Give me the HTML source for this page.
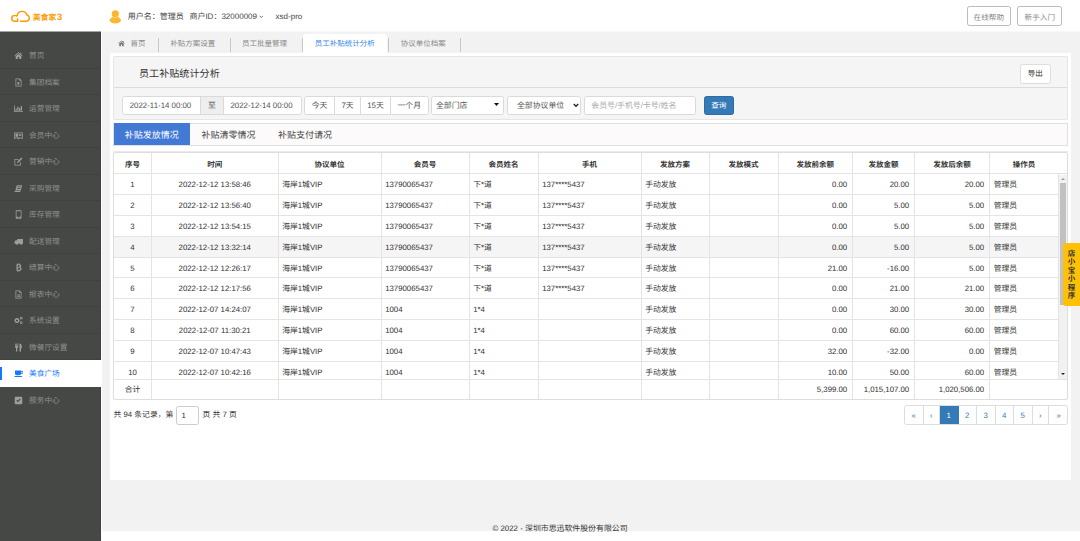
<!DOCTYPE html>
<html lang="zh-CN">
<head>
<meta charset="utf-8">
<title>员工补贴统计分析</title>
<style>
*{box-sizing:border-box;margin:0;padding:0}
html,body{width:1080px;height:541px;overflow:hidden;background:#fff}
body{text-rendering:geometricPrecision;font-family:"Liberation Sans","Noto Sans CJK SC",sans-serif;font-size:8px;color:#333;position:relative}
.abs{position:absolute}
/* header */
#hdr{left:0;top:0;width:1080px;height:31.5px;background:#fff}
#logo-t{left:32.7px;top:9.8px;font-size:7.9px;line-height:14px;color:#f90;font-weight:bold;white-space:nowrap}
#logo-t b{font-size:9.3px;margin-left:0.6px;vertical-align:-0.4px}
.uinfo{top:9.7px;height:14px;line-height:14px;font-size:8px;color:#444;white-space:nowrap}
.hbtn{top:6px;height:20px;border:1px solid #bbb;border-radius:2.5px;background:#fff;color:#888;font-size:7.6px;line-height:21px;text-align:center}
/* sidebar */
#side{left:0;top:32px;width:101px;height:509px;background:#454845;border-right:1px solid #3f423f}
.mi{left:0;width:100px;height:26.5px;border-bottom:1px solid #3f423f;color:#8f918f;font-size:7.7px;line-height:28.8px;white-space:nowrap}
.mi span{position:absolute;left:29px;top:0}
.mi svg{position:absolute;left:13.5px;top:9.3px;width:9px;height:9px;fill:#9c9e9c}
.mi.act{background:#fff;color:#1677ff;border-bottom:none;width:101px}
.mi.act:before{content:"";position:absolute;left:0;top:7px;width:2px;height:13px;background:#1677ff}
.mi:last-child{border-bottom:none}
.mi.act svg{fill:#1677ff}

.btn{color:#333}
#qry{left:703.5px;top:95.7px;width:30.5px;height:19px;background:#337ab7;border:1px solid #2e6da4;border-radius:2.5px;color:#fff;font-size:7.6px;line-height:17px;text-align:center}
#twrap{left:113px;top:152px;width:955px;height:248px;border:1px solid #ddd;border-radius:2px;overflow:hidden;background:#fff}
table.grid{border-collapse:collapse;table-layout:fixed;font-size:7.8px;color:#333}
.grid td,.grid th{border:1px solid #e4e4e4;height:20.9px;padding:2px 3.7px 0;white-space:nowrap;overflow:hidden;text-align:left;line-height:12px}
.grid th{font-size:7.5px;font-weight:bold;text-align:center;height:21px;padding-top:3px}
.grid td.c{text-align:center}.grid td.r{text-align:right;padding-right:4.8px}
.grid tr.hl td{background:#f5f5f5}
#thead{left:-1px!important;top:-1px!important}
#thfill{left:944px;top:0;width:10px;height:20.5px;background:#fff;border-bottom:1px solid #ddd}
#tbody{left:-1px;top:20.5px;width:946px;height:205.5px;overflow:hidden}
#tbody table{margin-top:-0.5px}
#sbar{left:944.5px;top:21.5px;width:9.5px;height:204.5px;background:#f1f1f1}
#sthumb{left:1px;top:8px;width:6.5px;height:122px;background:#c1c1c1}
#tfoot{left:-1px;top:225.5px}
#tfoot td{height:20.3px}
#pinfo{left:113.5px;top:406.3px;height:18.3px;line-height:18.3px;font-size:7.8px;color:#333;white-space:nowrap}
#pinp{display:inline-block;width:23px;height:18.3px;border:1px solid #ccc;border-radius:2.5px;vertical-align:top;text-align:left;padding-left:4px;line-height:17px;margin:0 1px}
#pager{left:904px;top:405px;height:20px;white-space:nowrap;font-size:0;border-radius:2.5px;overflow:hidden;border:1px solid #ddd;width:164px;background:#fff}
#pager span{display:inline-block;height:18px;line-height:20px;text-align:center;font-size:7.8px;color:#337ab7;border-right:1px solid #ddd;vertical-align:top}
#pager span:last-child{border-right:none}
#pager span.on{background:#337ab7;color:#fff;border-color:#337ab7}
#foot{left:40px;width:1040px;top:522px;height:13px;line-height:13px;text-align:center;font-size:7.9px;color:#333}
#ywid{left:1063px;top:242.5px;width:17px;height:63px;background:#ffc107;border-radius:3px 0 0 3px;font-size:7.5px;font-weight:bold;color:#333;line-height:8.5px;padding:7px 4.5px 0 4.7px;word-break:break-all}
/* main */
#main{left:101px;top:32px;width:979px;height:499px;background:#f2f2f2;border-left:1px solid #fff}
#tabs{left:109.3px;top:33.5px;height:20px;width:960px}
.tb{top:0;height:20px;line-height:19.4px;font-size:7.5px;color:#8a8a8a;white-space:nowrap;text-align:center}
.sep{top:4.5px;width:1px;height:14px;background:#c8c8c8}
#tab-act{background:#fff;color:#3787f0;border-radius:3px 3px 0 0}
#panel{left:110px;top:53px;width:961px;height:426.5px;background:#fff}
#well1{left:113px;top:56px;width:955px;height:32px;background:#f5f5f5;border:1px solid #e6e6e6;border-bottom:none;border-radius:2px 2px 0 0}
#title{left:139px;top:67px;font-size:10.1px;line-height:15px;color:#333;white-space:nowrap}
#exp{left:1020px;top:64.3px;width:30.5px;height:19.5px;border:1px solid #ddd;border-radius:2.5px;background:#fff;font-size:7.6px;line-height:17px;text-align:center;color:#333}
#well2{left:113px;top:87px;width:955px;height:32.5px;background:#f5f5f5;border:1px solid #e6e6e6;border-top:1.5px solid #dcdcdc;border-radius:0 0 2px 2px}
.inp{top:96px;height:18.7px;border:1px solid #dadada;background:#fff;font-size:7.87px;line-height:17px;color:#555;white-space:nowrap;text-align:center}
.addon{background:#eee;color:#555}
#nav{left:113px;top:122.5px;width:955px;height:23px;background:#fcfafa;border:1px solid #e2e0e0}
.nt{top:123px;height:22px;line-height:25.5px;font-size:9px;color:#444;text-align:center;white-space:nowrap}
#nt1{left:113.5px;width:76.5px;background:#4279d5;color:#fff}
</style>
</head>
<body>
<div id="hdr" class="abs"></div>
<svg class="abs" style="left:10px;top:9px;width:20px;height:14px" viewBox="0 0 40 28"><g fill="none" stroke="#f90" stroke-width="2.8" stroke-linecap="round" stroke-linejoin="round"><path d="M15 24.5H9.5a5.8 5.8 0 0 1-0.5-11.6c1.6-0.2 3.2 0.1 4.5 1"/><path d="M14.5 13.5c0.5-5 4.5-8.8 9.8-8.8 4.6 0 8.4 3 9.5 7.2 3 0.8 4.7 3.3 4.7 6.2 0 3.6-2.8 6.4-6.5 6.4H21"/><path d="M15.2 24.5v-5"/></g></svg>
<div id="logo-t" class="abs">美食家<b>3</b></div>
<svg class="abs" style="left:108.5px;top:10px;width:13px;height:14px" viewBox="0 0 26 28"><circle cx="12.6" cy="7.6" r="7.2" fill="#fdb62f"/><path d="M0.8 21c1-4 5-6.5 8-7 1.5 1 2.5 1.3 3.8 1.3s2.3-0.3 3.8-1.3c3 0.5 7 3 8 7-2 3.5-7 6-11.8 6S2.8 24.5 0.8 21z" fill="#fdb62f"/></svg>
<div class="abs uinfo" style="left:127.7px">用户名：管理员</div>
<div class="abs uinfo" style="left:189.4px">商户ID：32000009</div>
<svg class="abs" style="left:258.7px;top:14.6px;width:4.6px;height:3.4px" viewBox="0 0 9.2 6.8"><path d="M1 1.5l3.6 3.6 3.6-3.6" fill="none" stroke="#444" stroke-width="1.5"/></svg>
<div class="abs uinfo" style="left:275.6px">xsd-pro</div>
<div class="abs hbtn" style="left:966.8px;width:44px">在线帮助</div>
<div class="abs hbtn" style="left:1017.3px;width:45px">新手入门</div>

<div id="side" class="abs">
<div class="mi abs" style="top:10.0px"><svg viewBox="0 0 18 18"><path d="M9 2.5L0.8 9.3l1 1.2L9 4.6l7.2 5.9 1-1.2-2.7-2.2V3.5h-2v2zM3.3 10.5v5.5h4.2v-4h3v4h4.2v-5.5L9 5.8z"/></svg><span>首页</span></div>
<div class="mi abs" style="top:36.5px"><svg viewBox="0 0 18 18"><path d="M3 1h8.5L15 4.5V17H3zM4.5 2.5v13h9V5.5h-3v-3zM7 8h3.5v5.5H7z" fill-rule="evenodd"/></svg><span>集团档案</span></div>
<div class="mi abs" style="top:63.0px"><svg viewBox="0 0 18 18"><path d="M0 3h1.6v11.5H18V16H0zM3 9.5h2.5v4H3zM6.5 5.5H9v8H6.5zM10 8h2.5v5.5H10zM13.5 4H16v9.5h-2.5z"/></svg><span>运营管理</span></div>
<div class="mi abs" style="top:89.5px"><svg viewBox="0 0 18 18"><path d="M0.5 3h17v12.5h-3v-1h-2.5v1H6v-1H3.5v1h-3zM2 4.5v8.5h14V4.5zM3 5.5h5v6H3zM9.5 6h5.5v1.3H9.5zM9.5 8.5h5.5v1.3H9.5z" fill-rule="evenodd"/></svg><span>会员中心</span></div>
<div class="mi abs" style="top:116.0px"><svg viewBox="0 0 18 18"><path d="M1 4h9l-1.6 1.6H2.6v9.8h9.8v-4L14 9.8V17H1zM14.8 1l2.2 2.2-7.8 7.8-3.2 1 1-3.2z"/></svg><span>营销中心</span></div>
<div class="mi abs" style="top:142.5px"><svg viewBox="0 0 18 18"><path d="M5.5 2.5h11l-3 10.5h-11zM1.5 14h11.5l-0.6 2H1z M7 5l-0.4 1.5h7L14 5zM6.2 8l-0.4 1.5h7L13.2 8z" fill-rule="evenodd"/></svg><span>采购管理</span></div>
<div class="mi abs" style="top:169.0px"><svg viewBox="0 0 18 18"><path d="M5 0.5h8.5a1.5 1.5 0 0 1 1.5 1.5v14a1.5 1.5 0 0 1-1.5 1.5H5A1.5 1.5 0 0 1 3.5 16V2A1.5 1.5 0 0 1 5 0.5zM5 2.5v11h8.5v-11zM8 14.5v1.5h2.5v-1.5z" fill-rule="evenodd"/></svg><span>库存管理</span></div>
<div class="mi abs" style="top:195.5px"><svg viewBox="0 0 18 18"><path d="M6.5 4H18v9.5h-1.5a2.2 2.2 0 0 1-4.4 0H8.4a2.2 2.2 0 0 1-4.4 0H1V9.5L3.5 6.5h3z"/></svg><span>配送管理</span></div>
<div class="mi abs" style="top:222.0px"><svg viewBox="0 0 18 18"><path d="M5 2.5h1.7V0.5h1.6v2h1.2v-2h1.6v2.1c2.2 0.3 3.4 1.4 3.4 3.2 0 1.3-0.7 2.2-1.8 2.7 1.6 0.5 2.5 1.6 2.5 3.2 0 2.2-1.5 3.5-4.1 3.8V17.5H9.5v-2H8.3v2H6.7v-2H5zM7.5 4.5v3.3H9.5c1.4 0 2-0.6 2-1.7 0-1-0.7-1.6-2-1.6zM7.5 9.7v3.8h2.6c1.5 0 2.2-0.7 2.2-1.9s-0.8-1.9-2.2-1.9z" fill-rule="evenodd"/></svg><span>结算中心</span></div>
<div class="mi abs" style="top:248.5px"><svg viewBox="0 0 18 18"><path d="M3 1h8.5L15 4.5V17H3zM4.5 2.5v13h9V5.5h-3v-3zM6.5 8h5.5v1.2H6.5zM6.5 10.3h5.5v1.2H6.5zM6.5 12.6h5.5v1.2H6.5z" fill-rule="evenodd"/></svg><span>报表中心</span></div>
<div class="mi abs" style="top:275.0px"><svg viewBox="0 0 18 18"><path d="M6 4a5 5 0 1 0 0.01 0zM6 6.8a2.2 2.2 0 1 1-0.01 0zM14.5 1.5a2.7 2.7 0 1 0 0.01 0zM14.5 3.2a1 1 0 1 1-0.01 0zM14.5 10.5a2.7 2.7 0 1 0 0.01 0zM14.5 12.2a1 1 0 1 1-0.01 0z" fill-rule="evenodd"/></svg><span>系统设置</span></div>
<div class="mi abs" style="top:301.5px"><svg viewBox="0 0 18 18"><path d="M2 1h1.3v5h1.2V1h1.4v5h1.2V1H8.5v6.5c0 1.2-0.8 2-1.8 2.3V17H4V9.8C3 9.5 2 8.7 2 7.5zM11 1c3 0 4.5 2.3 4.5 5.5v4H14V17h-3z"/></svg><span>微餐厅设置</span></div>
<div class="mi abs act" style="top:328.0px"><svg viewBox="0 0 18 18"><path d="M2 3h12.5v1h1.5a2.8 2.8 0 0 1 0 5.6h-1.7c-0.4 1.7-1.7 2.9-3.5 2.9H5.5C3.6 12.5 2 11 2 9zM14.5 5.5v2.6h1.4a1.3 1.3 0 0 0 0-2.6zM0.5 14h16l-1.2 2.2H1.7z" fill-rule="evenodd"/></svg><span>美食广场</span></div>
<div class="mi abs" style="top:354.5px"><svg viewBox="0 0 18 18"><path d="M3.5 1.5h11a2 2 0 0 1 2 2v11a2 2 0 0 1-2 2h-11a2 2 0 0 1-2-2v-11a2 2 0 0 1 2-2zM4.5 9l3.3 3.3 5.7-6-1.5-1.4-4.2 4.5L6 7.5z" fill-rule="evenodd"/></svg><span>服务中心</span></div>
</div>

<div id="main" class="abs"></div>
<div class="abs" style="left:0;top:31px;width:101px;height:1px;background:#a2a4a2"></div><div class="abs" style="left:101px;top:31px;width:979px;height:1px;background:#f8f8f8"></div>
<div id="tabs" class="abs">
<svg class="abs" style="left:9px;top:6.5px;width:7px;height:7px" viewBox="0 0 16 16"><path fill="#777" d="M8 1.2L0.6 7.5l0.9 1L8 3l6.5 5.5 0.9-1L12.8 5.3V2h-1.8v1.7zM2.8 8.8V14.5h4V10.5h2.4v4h4V8.8L8 4.5z"/></svg>
<div class="abs tb" style="left:21.2px">首页</div>
<div class="abs sep" style="left:48.7px"></div>
<div class="abs tb" style="left:61px">补贴方案设置</div>
<div class="abs sep" style="left:120.3px"></div>
<div class="abs tb" style="left:132.7px">员工批量管理</div>
<div class="abs sep" style="left:192.3px"></div>
<div id="tab-act" class="abs tb" style="left:193.3px;width:84.5px">员工补贴统计分析</div>
<div class="abs sep" style="left:278.8px"></div>
<div class="abs tb" style="left:291.5px">协议单位档案</div>
<div class="abs sep" style="left:350.5px"></div>
</div>
<div id="panel" class="abs"></div>
<div id="well1" class="abs"></div>
<div id="title" class="abs">员工补贴统计分析</div>
<div id="exp" class="abs">导出</div>
<div id="well2" class="abs"></div>
<div class="abs inp" style="left:122px;width:79px;border-radius:2.5px 0 0 2.5px;padding-right:2px">2022-11-14 00:00</div>
<div class="abs inp addon" style="left:200px;width:24px">至</div>
<div class="abs inp" style="left:223px;width:79px;border-radius:0 2.5px 2.5px 0;padding-right:2px">2022-12-14 00:00</div>
<div class="abs inp btn" style="left:304px;width:31px;border-radius:2.5px 0 0 2.5px">今天</div>
<div class="abs inp btn" style="left:334px;width:27px">7天</div>
<div class="abs inp btn" style="left:360px;width:31px">15天</div>
<div class="abs inp btn" style="left:390px;width:38.5px;border-radius:0 2.5px 2.5px 0">一个月</div>
<div class="abs inp" style="left:431px;width:73.3px;border-radius:2.5px;text-align:left;padding-left:4px">全部门店</div>
<svg class="abs" style="left:493.5px;top:102.5px;width:5px;height:3px" viewBox="0 0 10 6"><path d="M0 0h10L5 6z" fill="#111"/></svg>
<div class="abs inp" style="left:506.5px;width:74.5px;border-radius:2.5px;text-align:left;padding-left:9.5px">全部协议单位</div>
<svg class="abs" style="left:572.5px;top:103px;width:6px;height:5px" viewBox="0 0 12 10"><path d="M1.5 2l4.5 4.5L10.5 2" fill="none" stroke="#222" stroke-width="2.6"/></svg>
<div class="abs inp" style="left:583.5px;width:112px;border-radius:2.5px;text-align:left;padding-left:6.8px;color:#aaa">会员号/手机号/卡号/姓名</div>
<div class="abs" id="qry">查询</div>
<div id="nav" class="abs"></div>
<div class="abs" style="left:113px;top:150.5px;width:955px;height:1px;background:#eaeaea"></div>
<div id="nt1" class="abs nt">补贴发放情况</div>
<div class="abs nt" style="left:201.5px">补贴清零情况</div>
<div class="abs nt" style="left:278px">补贴支付请况</div>
<div id="twrap" class="abs">
<table id="thead" class="abs grid" style="left:0;top:0;width:945px"><colgroup><col style="width:38px"><col style="width:126.5px"><col style="width:103px"><col style="width:88px"><col style="width:69px"><col style="width:103px"><col style="width:68px"><col style="width:69px"><col style="width:74.5px"><col style="width:62px"><col style="width:75px"><col style="width:69px"></colgroup><tr><th>序号</th><th>时间</th><th>协议单位</th><th>会员号</th><th>会员姓名</th><th>手机</th><th>发放方案</th><th>发放模式</th><th>发放前余额</th><th>发放金额</th><th>发放后余额</th><th>操作员</th></tr></table>
<div id="thfill" class="abs"></div>
<div id="tbody" class="abs"><table class="grid" style="width:945px"><colgroup><col style="width:38px"><col style="width:126.5px"><col style="width:103px"><col style="width:88px"><col style="width:69px"><col style="width:103px"><col style="width:68px"><col style="width:69px"><col style="width:74.5px"><col style="width:62px"><col style="width:75px"><col style="width:69px"></colgroup>
<tr><td class="c">1</td><td class="c">2022-12-12 13:58:46</td><td>海岸1城VIP</td><td>13790065437</td><td>下*道</td><td>137****5437</td><td>手动发放</td><td></td><td class="r">0.00</td><td class="r">20.00</td><td class="r">20.00</td><td>管理员</td></tr>
<tr><td class="c">2</td><td class="c">2022-12-12 13:56:40</td><td>海岸1城VIP</td><td>13790065437</td><td>下*道</td><td>137****5437</td><td>手动发放</td><td></td><td class="r">0.00</td><td class="r">5.00</td><td class="r">5.00</td><td>管理员</td></tr>
<tr><td class="c">3</td><td class="c">2022-12-12 13:54:15</td><td>海岸1城VIP</td><td>13790065437</td><td>下*道</td><td>137****5437</td><td>手动发放</td><td></td><td class="r">0.00</td><td class="r">5.00</td><td class="r">5.00</td><td>管理员</td></tr>
<tr class="hl"><td class="c">4</td><td class="c">2022-12-12 13:32:14</td><td>海岸1城VIP</td><td>13790065437</td><td>下*道</td><td>137****5437</td><td>手动发放</td><td></td><td class="r">0.00</td><td class="r">5.00</td><td class="r">5.00</td><td>管理员</td></tr>
<tr><td class="c">5</td><td class="c">2022-12-12 12:26:17</td><td>海岸1城VIP</td><td>13790065437</td><td>下*道</td><td>137****5437</td><td>手动发放</td><td></td><td class="r">21.00</td><td class="r">-16.00</td><td class="r">5.00</td><td>管理员</td></tr>
<tr><td class="c">6</td><td class="c">2022-12-12 12:17:56</td><td>海岸1城VIP</td><td>13790065437</td><td>下*道</td><td>137****5437</td><td>手动发放</td><td></td><td class="r">0.00</td><td class="r">21.00</td><td class="r">21.00</td><td>管理员</td></tr>
<tr><td class="c">7</td><td class="c">2022-12-07 14:24:07</td><td>海岸1城VIP</td><td>1004</td><td>1*4</td><td></td><td>手动发放</td><td></td><td class="r">0.00</td><td class="r">30.00</td><td class="r">30.00</td><td>管理员</td></tr>
<tr><td class="c">8</td><td class="c">2022-12-07 11:30:21</td><td>海岸1城VIP</td><td>1004</td><td>1*4</td><td></td><td>手动发放</td><td></td><td class="r">0.00</td><td class="r">60.00</td><td class="r">60.00</td><td>管理员</td></tr>
<tr><td class="c">9</td><td class="c">2022-12-07 10:47:43</td><td>海岸1城VIP</td><td>1004</td><td>1*4</td><td></td><td>手动发放</td><td></td><td class="r">32.00</td><td class="r">-32.00</td><td class="r">0.00</td><td>管理员</td></tr>
<tr><td class="c">10</td><td class="c">2022-12-07 10:42:16</td><td>海岸1城VIP</td><td>1004</td><td>1*4</td><td></td><td>手动发放</td><td></td><td class="r">10.00</td><td class="r">50.00</td><td class="r">60.00</td><td>管理员</td></tr>
</table></div>
<div id="sbar" class="abs"><div id="sthumb" class="abs"></div><div class="abs" style="left:2px;top:3px;width:0;height:0;border:2px solid transparent;border-bottom:2.5px solid #999;border-top:none"></div><div class="abs" style="left:2px;bottom:4.5px;width:0;height:0;border:2px solid transparent;border-top:2.5px solid #222;border-bottom:none"></div></div>
<table id="tfoot" class="abs grid" style="width:954px"><colgroup><col style="width:38px"><col style="width:126.5px"><col style="width:103px"><col style="width:88px"><col style="width:69px"><col style="width:103px"><col style="width:68px"><col style="width:69px"><col style="width:74.5px"><col style="width:62px"><col style="width:75px"><col style="width:78px"></colgroup><tr><td class="c">合计</td><td></td><td></td><td></td><td></td><td></td><td></td><td></td><td class="r">5,399.00</td><td class="r">1,015,107.00</td><td class="r">1,020,506.00</td><td></td></tr></table>
</div>
<div class="abs" id="pinfo">共 94 条记录，第 <span id="pinp">1</span> 页 共 7 页</div>
<div class="abs" id="pager"><span style="width:18.5px">«</span><span style="width:16.5px">‹</span><span class="on" style="width:18.5px">1</span><span style="width:18.5px">2</span><span style="width:18.5px">3</span><span style="width:18.5px">4</span><span style="width:18.5px">5</span><span style="width:16.5px">›</span><span style="width:19.5px">»</span></div>
<div class="abs" id="foot">© 2022 - 深圳市思迅软件股份有限公司</div>
<div class="abs" id="ywid">店小宝小程序</div>
</body>
</html>
